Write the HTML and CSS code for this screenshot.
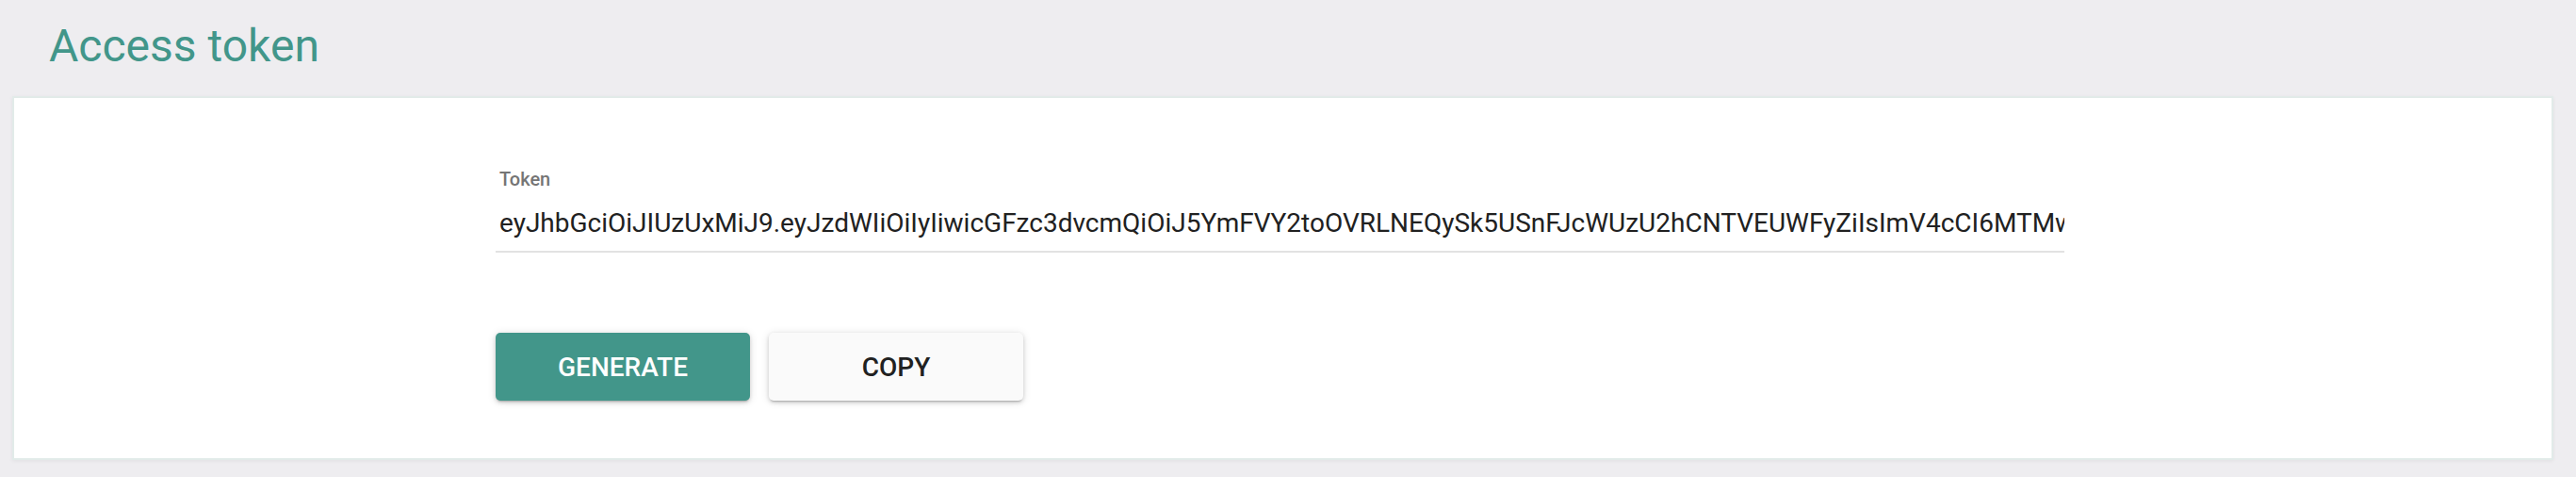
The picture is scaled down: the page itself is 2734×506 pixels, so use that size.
FILE: index.html
```html
<!DOCTYPE html>
<html lang="en">
<head>
<meta charset="utf-8">
<title>Access token</title>
<link rel="stylesheet" href="styles.css">
</head>
<body>
  <header class="page-header">
    <h1 class="page-title">Access token</h1>
  </header>
  <main class="card">
    <div class="content">
      <div class="field">
        <label class="field-label">Token</label>
        <div class="field-value">eyJhbGciOiJIUzUxMiJ9.eyJzdWIiOiIyIiwicGFzc3dvcmQiOiJ5YmFVY2toOVRLNEQySk5USnFJcWUzU2hCNTVEUWFyZiIsImV4cCI6MTMwNjQ4NzQwMH0.Qw3rTz8kLmN2pV0xYb7sDfGh1JkLqRsTuVwXyZ</div>
      </div>
      <div class="actions">
        <button class="btn btn-primary" type="button">GENERATE</button>
        <button class="btn btn-default" type="button">COPY</button>
      </div>
    </div>
  </main>
</body>
</html>
```

FILE: styles.css
```css
* { box-sizing: border-box; }

html, body {
  margin: 0;
  padding: 0;
}

body {
  background: #eeedf0;
  font-family: Roboto, "Liberation Sans", Arial, sans-serif;
  width: 2734px;
  height: 506px;
  overflow: hidden;
}

.page-header {
  padding: 21px 0 0 52px;
  height: 102px;
}

.page-title {
  margin: 0;
  font-size: 48px;
  line-height: 56px;
  font-weight: 400;
  color: #42968a;
}

.card {
  margin: 0 24px 0 13px;
  height: 386px;
  background: #ffffff;
  border: 2px solid #e2ebe9;
  box-shadow: 0 1px 4px rgba(0, 0, 0, 0.06);
  display: flex;
  justify-content: center;
  padding: 74px 6px 0 0;
}

.content {
  width: 1665px;
  display: flex;
  flex-direction: column;
}

.field {
  display: flex;
  flex-direction: column;
  padding-left: 4px;
  border-bottom: 2px solid #e2e2e2;
}

.field-label {
  font-size: 20px;
  line-height: 24px;
  font-weight: 500;
  color: #757575;
}

.field-value {
  margin-top: 18px;
  padding-bottom: 12px;
  font-size: 28px;
  line-height: 34px;
  color: #212121;
  white-space: nowrap;
  overflow: hidden;
}

.actions {
  display: flex;
  gap: 20px;
  margin-top: 85px;
}

.btn {
  width: 270px;
  height: 72px;
  border: none;
  border-radius: 5px;
  font-family: Roboto, "Liberation Sans", Arial, sans-serif;
  font-size: 28px;
  font-weight: 500;
  box-shadow: 0 3px 2px -2px rgba(0, 0, 0, 0.2), 0 2px 4px 0 rgba(0, 0, 0, 0.14), 0 1px 10px 0 rgba(0, 0, 0, 0.12);
  cursor: pointer;
}

.btn-primary {
  background: #42968a;
  color: #ffffff;
}

.btn-default {
  background: #fafafa;
  color: #212121;
}
```
